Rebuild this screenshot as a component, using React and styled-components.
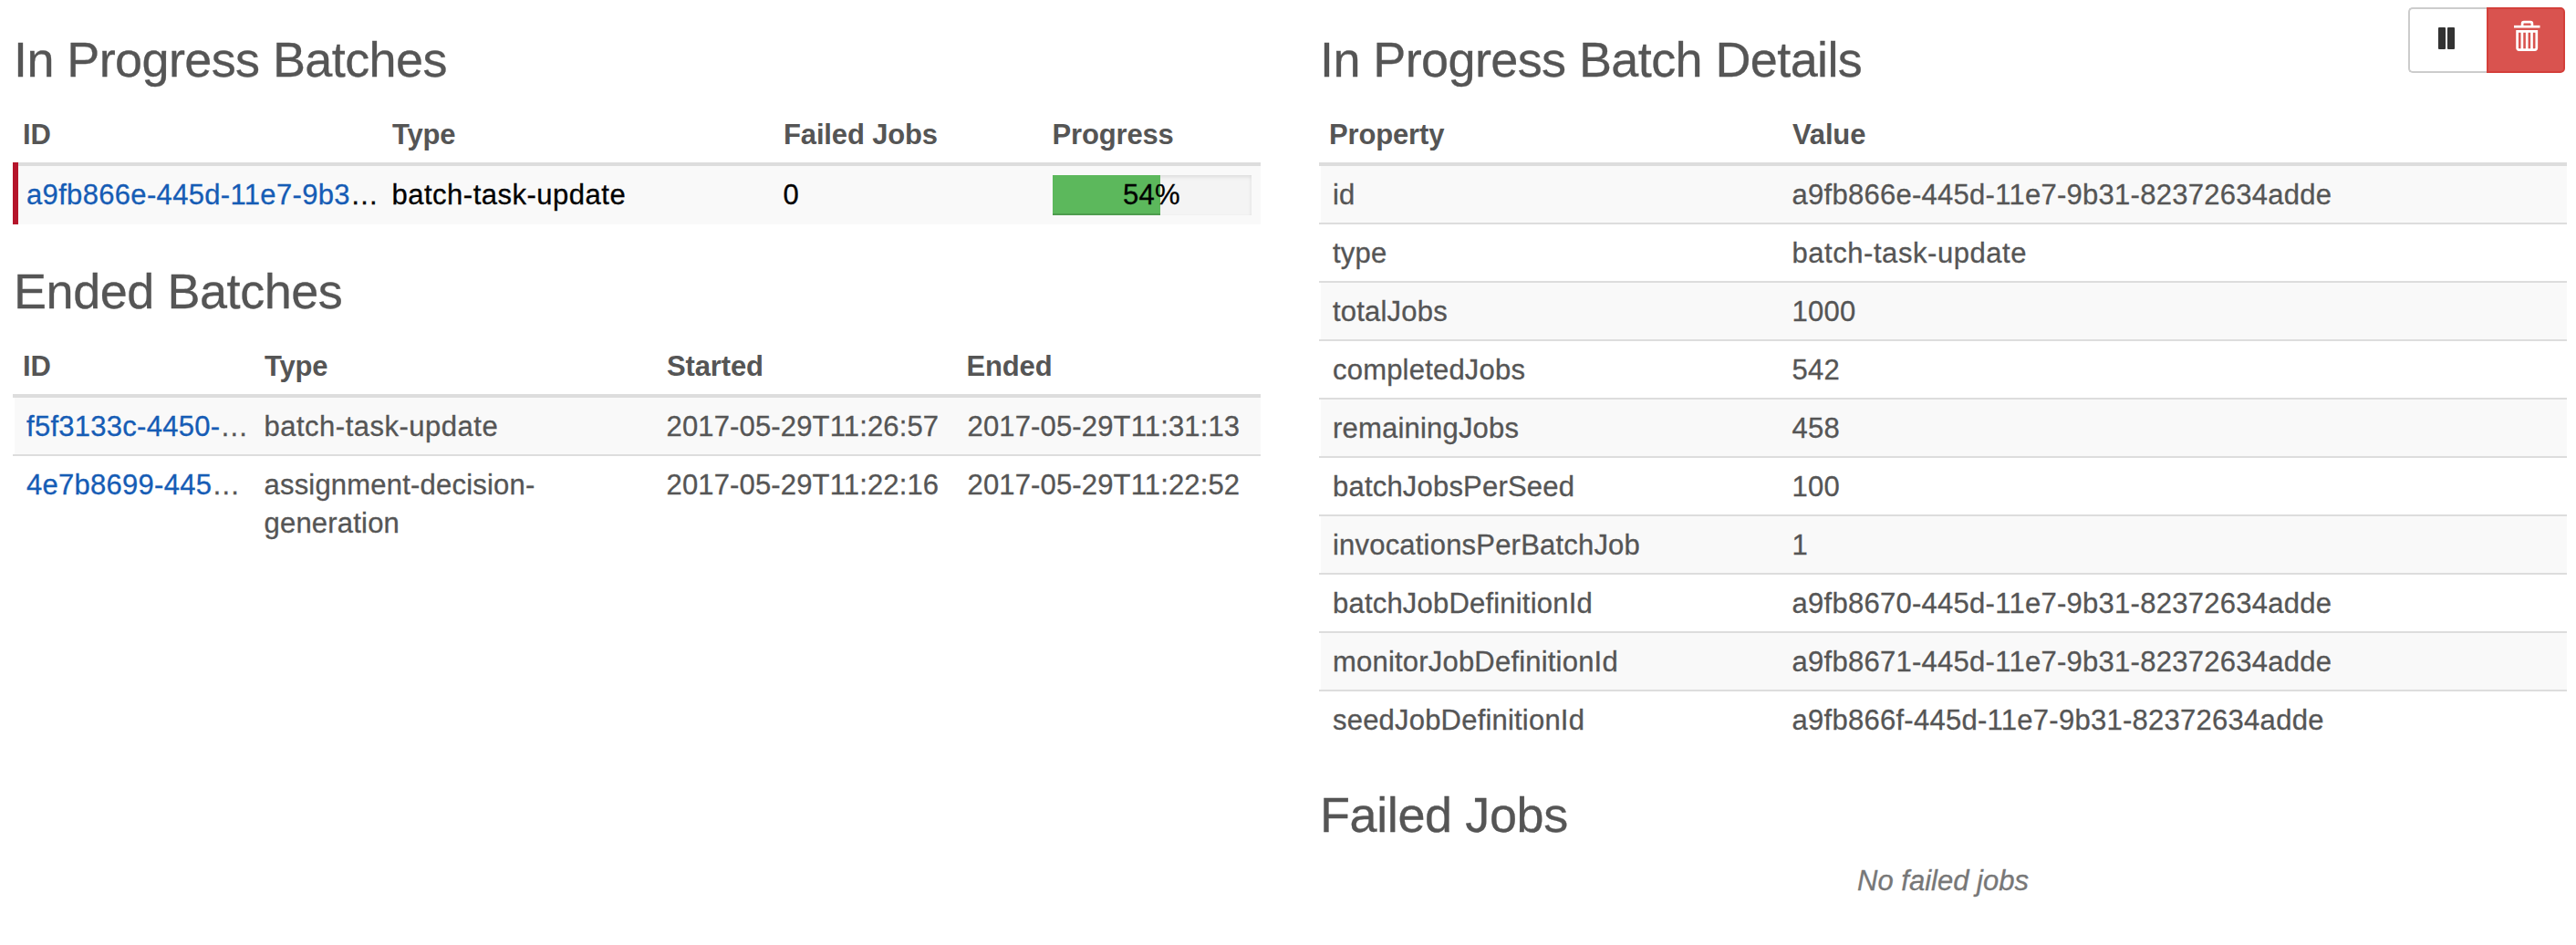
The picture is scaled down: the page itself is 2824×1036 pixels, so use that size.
import React from "react";
import styled, { createGlobalStyle, css } from "styled-components";

const GlobalStyle = createGlobalStyle`
  *, *::before, *::after { box-sizing: border-box; }
  body {
    margin: 0;
    background: #fff;
    color: #555;
    font: 31px/42px "Liberation Sans", Arial, sans-serif;
    letter-spacing: 0.25px;
    -webkit-text-stroke: 0.3px;
  }
`;

const Page = styled.main`
  display: grid;
  grid-template-columns: 1368px 1368px;
  column-gap: 64px;
  padding: 35px 10px 0 14px;
  min-height: 1036px;
`;

const Column = styled.section`
  display: flex;
  flex-direction: column;
`;

const TitleBar = styled.header`
  display: flex;
  justify-content: space-between;
  align-items: flex-start;
  height: 60px;
  margin: ${(p) => (p.$spaced ? "43px" : "0")} 0 21px;
  padding-left: 1px;
`;

const Title = styled.h2`
  margin: 0;
  font-size: 54px;
  font-weight: 400;
  line-height: 60px;
  letter-spacing: ${(p) => p.$tracking ?? -0.6}px;
`;

const Table = styled.div`
  display: flex;
  flex-direction: column;
`;

const rowGrid = css`
  display: grid;
  grid-template-columns: ${(p) => p.$columns};
`;

const HeadRow = styled.div`
  ${rowGrid}
  border-bottom: 4px solid #ddd;
  font-weight: 700;
  letter-spacing: -0.15px;
  -webkit-text-stroke: 0;
`;

const HeadCell = styled.div`
  padding: 11px 10px 9px 11px;

  &:nth-child(4) { padding-left: 9.5px; }
`;

const Row = styled.div`
  ${rowGrid}
  border-bottom: 2px solid #ddd;
  background: linear-gradient(#f9f9f9, #f9f9f9) 2px 0 no-repeat;

  &:nth-child(odd) { background: none; }
  &:last-child { border-bottom: 0; }
`;

const SelectedRow = styled.div`
  ${rowGrid}
  position: relative;
  height: 64px;
  background: #f9f9f9;
  color: #000;

  &::before {
    content: "";
    position: absolute;
    left: 0;
    top: -4px;
    bottom: 0;
    width: 6px;
    background: #b5152b;
  }
`;

const Cell = styled.div`
  padding: 11px 10px 9px;
  padding-left: ${(p) => (p.$lead ? "15px" : "10.5px")};
  letter-spacing: ${(p) => p.$tracking ?? 0.27}px;
  white-space: nowrap;
`;

const WrapCell = styled(Cell)`
  padding-right: 90px;
  white-space: normal;
`;

const BarCell = styled.div`
  padding: 10px;
`;

const Link = styled.a`
  color: #155cb5;
  text-decoration: none;
`;

const Progress = styled.div`
  display: grid;
  height: 44px;
  background: #f4f4f4;
  box-shadow: inset 0 2px 4px rgba(0, 0, 0, 0.1);
`;

const ProgressFill = styled.div`
  grid-area: 1 / 1;
  background: #5cb85c;
  box-shadow: inset 0 -2px 0 rgba(0, 0, 0, 0.15);
`;

const ProgressLabel = styled.div`
  grid-area: 1 / 1;
  padding-right: 1px;
  line-height: 44px;
  text-align: center;
`;

const ButtonGroup = styled.div`
  display: flex;
  margin: -27px 2px 0 0;
`;

const IconButton = styled.button`
  display: block;
  width: 86px;
  height: 72px;
  padding: 0;
  border: 2px solid ${(p) => (p.$danger ? "#d43f3a" : "#ccc")};
  border-right-width: ${(p) => (p.$danger ? "2px" : "0")};
  border-radius: ${(p) => (p.$danger ? "0 5px 5px 0" : "5px 0 0 5px")};
  background: ${(p) => (p.$danger ? "#d9534f" : "#fff")};
  color: ${(p) => (p.$danger ? "#fff" : "#333")};

  svg { display: block; }
`;

const Empty = styled.p`
  margin: 0;
  padding-top: 1px;
  color: #777;
  font-style: italic;
  letter-spacing: 0;
  text-align: center;
`;

const PauseIcon = () => (
  <svg width="82" height="68" viewBox="0 0 82 68" fill="currentColor">
    <rect x="31" y="20" width="8" height="24" rx="1" />
    <rect x="41" y="20" width="8" height="24" rx="1" />
  </svg>
);

const TrashIcon = () => (
  <svg width="82" height="68" viewBox="0 0 82 68" fill="none" stroke="currentColor" strokeWidth="2.7">
    <path d="M28 19.2h28.5" />
    <path d="M37.1 18.5v-2.6a1.8 1.8 0 0 1 1.8-1.8h7.2a1.8 1.8 0 0 1 1.8 1.8v2.6" />
    <path d="M31.6 24.3h21.2v18.3a2 2 0 0 1-2 2h-17.2a2 2 0 0 1-2-2z" />
    <path d="M36.9 24v20M42.2 24v20M47.5 24v20" />
  </svg>
);

const progressColumns = "405px 429px 296px 238px";
const endedColumns = "265px 441px 330px 332px";
const detailColumns = "508px 860px";

const percent = 54.2;

const endedBatches = [
  { id: "f5f3133c-4450-", type: "batch-task-update", tracking: 0.5, started: "2017-05-29T11:26:57", ended: "2017-05-29T11:31:13" },
  { id: "4e7b8699-445", type: "assignment-decision-generation", tracking: 0.2, started: "2017-05-29T11:22:16", ended: "2017-05-29T11:22:52" },
];

const details = [
  ["id", "a9fb866e-445d-11e7-9b31-82372634adde"],
  ["type", "batch-task-update", 0.55],
  ["totalJobs", "1000"],
  ["completedJobs", "542"],
  ["remainingJobs", "458"],
  ["batchJobsPerSeed", "100"],
  ["invocationsPerBatchJob", "1"],
  ["batchJobDefinitionId", "a9fb8670-445d-11e7-9b31-82372634adde"],
  ["monitorJobDefinitionId", "a9fb8671-445d-11e7-9b31-82372634adde"],
  ["seedJobDefinitionId", "a9fb866f-445d-11e7-9b31-82372634adde"],
];

function Head({ columns, labels }) {
  return (
    <HeadRow $columns={columns}>
      {labels.map((label) => (
        <HeadCell key={label}>{label}</HeadCell>
      ))}
    </HeadRow>
  );
}

export default function App() {
  return (
    <>
      <GlobalStyle />
      <Page>
        <Column>
          <TitleBar>
            <Title>In Progress Batches</Title>
          </TitleBar>
          <Table>
            <Head columns={progressColumns} labels={["ID", "Type", "Failed Jobs", "Progress"]} />
            <SelectedRow $columns={progressColumns}>
              <Cell $lead $tracking={0.33}><Link>a9fb866e-445d-11e7-9b3</Link>…</Cell>
              <Cell $tracking={0.5}>batch-task-update</Cell>
              <Cell>0</Cell>
              <BarCell>
                <Progress>
                  <ProgressFill style={{ width: `${percent}%` }} />
                  <ProgressLabel>{Math.floor(percent)}%</ProgressLabel>
                </Progress>
              </BarCell>
            </SelectedRow>
          </Table>

          <TitleBar $spaced>
            <Title $tracking={-0.45}>Ended Batches</Title>
          </TitleBar>
          <Table>
            <Head columns={endedColumns} labels={["ID", "Type", "Started", "Ended"]} />
            {endedBatches.map((b) => (
              <Row key={b.id} $columns={endedColumns}>
                <Cell $lead><Link>{b.id}</Link>…</Cell>
                <WrapCell $tracking={b.tracking}>{b.type}</WrapCell>
                <Cell $tracking={0.15}>{b.started}</Cell>
                <Cell $tracking={0.15}>{b.ended}</Cell>
              </Row>
            ))}
          </Table>
        </Column>

        <Column>
          <TitleBar>
            <Title>In Progress Batch Details</Title>
            <ButtonGroup>
              <IconButton aria-label="Suspend"><PauseIcon /></IconButton>
              <IconButton $danger aria-label="Delete"><TrashIcon /></IconButton>
            </ButtonGroup>
          </TitleBar>
          <Table>
            <Head columns={detailColumns} labels={["Property", "Value"]} />
            {details.map(([name, value, tracking]) => (
              <Row key={name} $columns={detailColumns}>
                <Cell $lead $tracking={0.2}>{name}</Cell>
                <Cell $tracking={tracking}>{value}</Cell>
              </Row>
            ))}
          </Table>

          <TitleBar $spaced>
            <Title $tracking={-0.4}>Failed Jobs</Title>
          </TitleBar>
          <Empty>No failed jobs</Empty>
        </Column>
      </Page>
    </>
  );
}
